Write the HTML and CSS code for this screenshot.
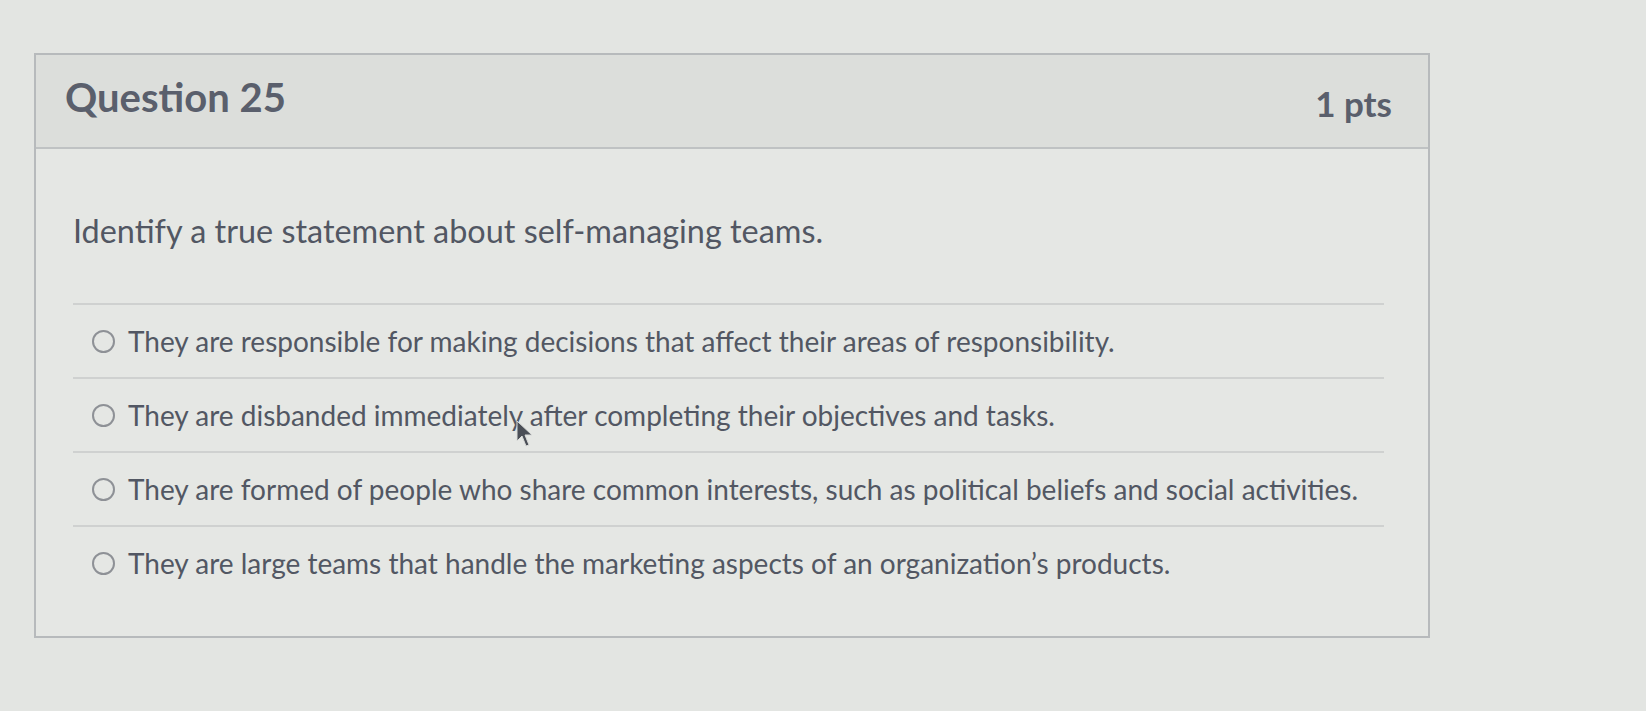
FILE: index.html
```html
<!DOCTYPE html>
<html>
<head>
<meta charset="utf-8">
<link rel="stylesheet" href="styles.css">
</head>
<body>
<div class="page">
  <div class="card">
    <div class="card-header">
      <span class="q-name">Question 25</span>
      <span class="q-points">1 pts</span>
    </div>
    <div class="card-body">
      <p class="q-text">Identify a true statement about self-managing teams.</p>
      <div class="answers">
        <label class="answer"><span class="radio"></span><span class="answer-text">They are responsible for making decisions that affect their areas of responsibility.</span></label>
        <label class="answer"><span class="radio"></span><span class="answer-text">They are disbanded immediately after completing their objectives and tasks.</span></label>
        <label class="answer"><span class="radio"></span><span class="answer-text">They are formed of people who share common interests, such as political beliefs and social activities.</span></label>
        <label class="answer"><span class="radio"></span><span class="answer-text">They are large teams that handle the marketing aspects of an organization’s products.</span></label>
      </div>
    </div>
  </div>
  <svg class="cursor" width="18" height="28" viewBox="0 0 18 28"><path d="M1 1 L1 21 L6 16 L10 26 L13 25 L9 15 L16 15 Z" fill="#4a4e56" stroke="#d8dad8" stroke-width="1"/></svg>
</div>
</body>
</html>
```
FILE: styles.css
```css
html, body {
  margin: 0;
  padding: 0;
}
body {
  background: #e3e5e2;
  font-family: Lato, "Open Sans", sans-serif;
  color: #525763;
}
.page {
  position: relative;
  padding: 53px 0 0 34px;
  height: 658px;
}
.card {
  width: 1392px;
  border: 2px solid #b7babc;
  background: #e5e7e4;
}
.card-header {
  height: 92px;
  background: #dcdedb;
  border-bottom: 2px solid #bfc2c3;
  display: flex;
  align-items: center;
  justify-content: space-between;
  padding: 0 36px 0 29px;
}
.q-name {
  font-size: 40px;
  font-weight: 700;
  color: #5a5f6c;
  margin-top: -8px;
}
.q-points {
  font-size: 35px;
  font-weight: 700;
  color: #5a5f6c;
  margin-top: 4px;
}
.card-body {
  padding: 62px 44px 37px 37px;
}
.q-text {
  margin: 0 0 52px 0;
  font-size: 32.4px;
  line-height: 40px;
}
.answers {
  display: flex;
  flex-direction: column;
}
.answer {
  display: flex;
  align-items: center;
  gap: 13px;
  height: 74px;
  border-top: 2px solid #cfd1d0;
  padding-left: 19px;
  box-sizing: border-box;
  font-size: 28px;
}
.radio {
  width: 19px;
  height: 19px;
  border: 2px solid #8e9196;
  border-radius: 50%;
  flex: none;
}
.cursor {
  position: absolute;
  left: 516px;
  top: 420px;
}
```
